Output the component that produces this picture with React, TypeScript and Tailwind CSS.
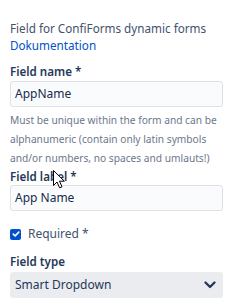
const font = { fontFamily: '"Noto Sans", "Open Sans", sans-serif' };

function Label({ children }: { children: React.ReactNode }) {
  return <div className="text-[11.6px] leading-[16px] font-semibold text-[#253858]">{children}</div>;
}

function TextInput({ value }: { value: string }) {
  return (
    <div className="h-[26px] w-[213px] rounded-[3px] border border-[#dfe1e6] bg-[#fafbfc] pl-[4px] flex items-center text-[12px] text-[#172b4d]">
      {value}
    </div>
  );
}

export default function App() {
  return (
    <div className="relative w-[241px] h-[307px] bg-white overflow-hidden" style={font}>
      <div className="pl-[10px] pt-[20px] flex flex-col">
        <div className="text-[11.7px] leading-[17px] text-[#42526e]">Field for ConfiForms dynamic forms</div>
        <a className="text-[11.7px] leading-[17px] text-[#0052cc]">Dokumentation</a>

        {/* Field name */}
        <div className="mt-[10px]">
          <Label>Field name *</Label>
        </div>
        <div className="mt-[1px]">
          <TextInput value="AppName" />
        </div>
        <p className="mt-[4px] w-[222px] text-[10.2px] leading-[19px] text-[#6b778c]">
          Must be unique within the form and can be alphanumeric (contain only latin symbols and/or numbers, no spaces and umlauts!)
        </p>

        {/* Field label */}
        <div className="mt-[1px]">
          <Label>Field label *</Label>
        </div>
        <TextInput value="App Name" />

        {/* Required */}
        <div className="mt-[15px] h-[16px] flex items-center gap-[7px]">
          <span className="w-[11px] h-[11px] rounded-[2px] bg-[#0052cc] flex items-center justify-center">
            <svg width="8" height="8" viewBox="0 0 8 8" fill="none">
              <path d="M1.3 4.1 L3.2 5.9 L6.8 2.1" stroke="white" strokeWidth="1.6" strokeLinecap="round" strokeLinejoin="round" />
            </svg>
          </span>
          <span className="text-[12px] text-[#42526e]">Required *</span>
        </div>

        {/* Field type */}
        <div className="mt-[12px]">
          <Label>Field type</Label>
        </div>
        <div className="mt-[2px] h-[26px] w-[213px] rounded-[3px] bg-[#ebecf0] pl-[5px] pr-[7px] flex items-center justify-between text-[12px] text-[#253858]">
          <span>Smart Dropdown</span>
          <svg width="12" height="8" viewBox="0 0 12 8" fill="none">
            <path d="M1.5 1.5 L6 6 L10.5 1.5" stroke="#253858" strokeWidth="2.3" strokeLinecap="round" strokeLinejoin="round" />
          </svg>
        </div>
      </div>

      {/* mouse pointer */}
      <svg className="absolute left-[53px] top-[170px]" width="13" height="19" viewBox="0 0 13 19">
        <path d="M0.5 0.5 L0.5 15.5 L4 12 L6.6 17.8 L9 16.8 L6.5 11.2 L11.3 11.2 Z" fill="white" stroke="black" strokeWidth="1" strokeLinejoin="round" />
      </svg>
    </div>
  );
}
